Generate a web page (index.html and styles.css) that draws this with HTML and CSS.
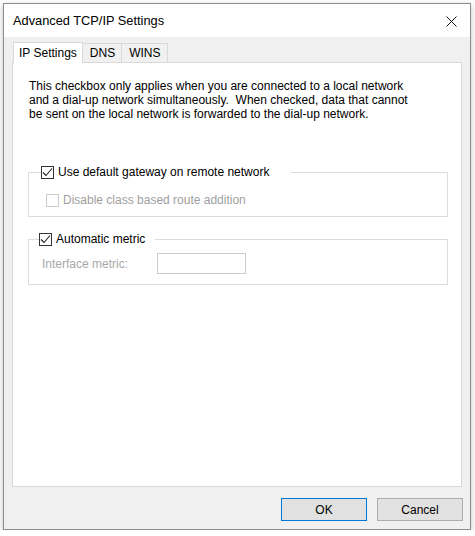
FILE: index.html
```html
<!DOCTYPE html>
<html lang="en">
<head>
    <meta charset="UTF-8">
    <title>Advanced TCP/IP Settings</title>
    <link rel="stylesheet" href="styles.css">
</head>
<body>
    <div class="window">
        <div class="titlebar">
            <span class="title">Advanced TCP/IP Settings</span>
            <svg class="close" width="11" height="11" viewBox="0 0 11 11">
                <path d="M0.5 0.5 L10.5 10.5 M10.5 0.5 L0.5 10.5" stroke="#111" stroke-width="1" fill="none"/>
            </svg>
        </div>

        <div class="client">
            <div class="tabs">
                <div class="tab selected">IP Settings</div>
                <div class="tab">DNS</div>
                <div class="tab">WINS</div>
            </div>

            <div class="panel">
                <p class="note">This checkbox only applies when you are connected to a local network and a dial-up network simultaneously.&nbsp; When checked, data that cannot be sent on the local network is forwarded to the dial-up network.</p>

                <fieldset class="group group-gateway">
                    <legend class="legend legend-gateway">
                        <span class="check checked">
                            <svg width="11" height="11" viewBox="0 0 11 11"><path d="M1 5.5 L4 8.5 L10 1.5" stroke="#222" stroke-width="1.1" fill="none"/></svg>
                        </span>
                        <span class="label">Use default gateway on remote network</span>
                    </legend>
                    <div class="row row-disabled">
                        <span class="check disabled"></span>
                        <span class="label">Disable class based route addition</span>
                    </div>
                </fieldset>

                <fieldset class="group group-metric">
                    <legend class="legend legend-metric">
                        <span class="check checked">
                            <svg width="11" height="11" viewBox="0 0 11 11"><path d="M1 5.5 L4 8.5 L10 1.5" stroke="#222" stroke-width="1.1" fill="none"/></svg>
                        </span>
                        <span class="label">Automatic metric</span>
                    </legend>
                    <div class="row row-metric">
                        <span class="field-label">Interface metric:</span>
                        <span class="textbox"></span>
                    </div>
                </fieldset>
            </div>

            <div class="buttons">
                <button class="btn default">OK</button>
                <button class="btn">Cancel</button>
            </div>
        </div>
    </div>
</body>
</html>
```

FILE: styles.css
```css
body {
    margin: 0;
    background: #ffffff;
    font-family: 'Liberation Sans', Arial, sans-serif;
    font-size: 12px;
    color: #000;
}
.window {
    margin: 3px 0 0 3px;
    width: 468px;
    height: 527px;
    box-sizing: border-box;
    border: 1px solid #8c8c8c;
    box-shadow: 0 2px 6px rgba(0,0,0,0.25);
    display: flex;
    flex-direction: column;
    background: #f0f0f0;
}
.titlebar {
    height: 33px;
    background: #ffffff;
    display: flex;
    align-items: center;
    justify-content: space-between;
    padding: 0 13px 0 9px;
}
.title {
    font-size: 12.8px;
    color: #000;
}
.close {
    margin-top: 1px;
}
.client {
    flex: 1;
    display: flex;
    flex-direction: column;
    padding: 6px 7px 0 8px;
}
.tabs {
    display: flex;
    align-items: flex-end;
    height: 19px;
    padding-left: 1px;
}
.tab {
    height: 18px;
    line-height: 18px;
    padding: 0 6px 0 7px;
    border: 1px solid #d9d9d9;
    border-bottom: none;
    border-left: none;
    background: #f0f0f0;
    font-size: 12px;
}
.tab.selected {
    height: 20px;
    line-height: 20px;
    margin-bottom: -1px;
    padding: 0 5px 0 5px;
    border-left: 1px solid #d9d9d9;
    background: #ffffff;
    position: relative;
    z-index: 1;
}
.panel {
    width: 450px;
    height: 425px;
    box-sizing: border-box;
    background: #ffffff;
    border: 1px solid #d9d9d9;
    padding: 16px 0 0 15px;
}
.note {
    margin: 0 0 0 1px;
    width: 380px;
    line-height: 14px;
}
.group {
    margin: 0;
    padding: 0;
    width: 420px;
    box-sizing: border-box;
    border: 1px solid #dcdcdc;
    min-inline-size: 0;
}
.group-gateway {
    margin-top: 44px;
    height: 52px;
}
.group-metric {
    margin-top: 15px;
    height: 53px;
}
.legend {
    display: flex;
    align-items: center;
    height: 14px;
    padding: 0;
    background: #ffffff;
}
.legend-gateway {
    margin-left: 12px;
    width: 250px;
}
.legend-metric {
    margin-left: 10px;
    width: 116px;
}
.check {
    width: 13px;
    height: 13px;
    box-sizing: border-box;
    border: 1px solid #333333;
    background: #ffffff;
    display: inline-flex;
    align-items: center;
    justify-content: center;
    flex: none;
}
.check.disabled {
    border-color: #cccccc;
}
.label {
    margin-left: 4px;
    white-space: nowrap;
}
.row {
    display: flex;
    align-items: center;
}
.row-disabled {
    margin: 14px 0 0 17px;
    color: #a0a0a0;
}
.row-metric {
    margin: 7px 0 0 13px;
    color: #a8a8a8;
}
.field-label {
    width: 115px;
}
.textbox {
    width: 89px;
    height: 21px;
    box-sizing: border-box;
    border: 1px solid #cccccc;
    background: #ffffff;
}
.buttons {
    display: flex;
    justify-content: flex-end;
    gap: 10px;
    margin-top: 11px;
}
.btn {
    width: 86px;
    height: 23px;
    box-sizing: border-box;
    border: 1px solid #adadad;
    background: #e1e1e1;
    font-family: 'Liberation Sans', Arial, sans-serif;
    font-size: 12px;
    color: #000;
    padding: 0;
}
.btn.default {
    border-color: #0078d7;
}
```
